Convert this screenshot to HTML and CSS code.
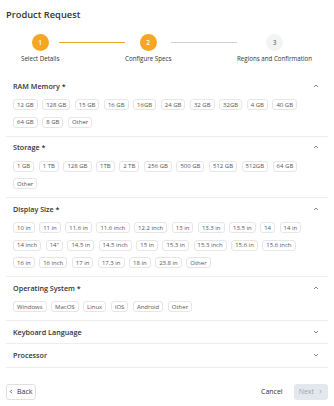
FILE: index.html
```html
<!DOCTYPE html>
<html>
<head>
<meta charset="utf-8">
<link rel="stylesheet" href="styles.css">
</head>
<body>
<div class="page">
  <h1 class="title">Product Request</h1>
  <div class="stepper">
    <div class="step"><div class="dot active">1</div><div class="step-label">Select Details</div></div>
    <div class="connector done"></div>
    <div class="step"><div class="dot active">2</div><div class="step-label">Configure Specs</div></div>
    <div class="connector"></div>
    <div class="step"><div class="dot">3</div><div class="step-label">Regions and Confirmation</div></div>
  </div>

  <section class="section first">
    <div class="section-head"><span class="section-title">RAM Memory *</span><svg class="chev" viewBox="0 0 6 6"><polyline points="1,4 3,2 5,4"/></svg></div>
    <div class="chips">
      <span class="chip">12 GB</span><span class="chip">128 GB</span><span class="chip">15 GB</span><span class="chip">16 GB</span><span class="chip">16GB</span><span class="chip">24 GB</span><span class="chip">32 GB</span><span class="chip">32GB</span><span class="chip">4 GB</span><span class="chip">40 GB</span><span class="chip">64 GB</span><span class="chip">8 GB</span><span class="chip">Other</span>
    </div>
  </section>

  <section class="section">
    <div class="section-head"><span class="section-title">Storage *</span><svg class="chev" viewBox="0 0 6 6"><polyline points="1,4 3,2 5,4"/></svg></div>
    <div class="chips">
      <span class="chip">1 GB</span><span class="chip">1 TB</span><span class="chip">128 GB</span><span class="chip">1TB</span><span class="chip">2 TB</span><span class="chip">256 GB</span><span class="chip">500 GB</span><span class="chip">512 GB</span><span class="chip">512GB</span><span class="chip">64 GB</span><span class="chip">Other</span>
    </div>
  </section>

  <section class="section">
    <div class="section-head"><span class="section-title">Display Size *</span><svg class="chev" viewBox="0 0 6 6"><polyline points="1,4 3,2 5,4"/></svg></div>
    <div class="chips">
      <span class="chip">10 in</span><span class="chip">11 in</span><span class="chip">11.6 in</span><span class="chip">11.6 inch</span><span class="chip">12.2 inch</span><span class="chip">13 in</span><span class="chip">13.3 in</span><span class="chip">13.5 in</span><span class="chip">14</span><span class="chip">14 in</span><span class="chip">14 inch</span><span class="chip">14"</span><span class="chip">14.5 in</span><span class="chip">14.5 inch</span><span class="chip">15 in</span><span class="chip">15.3 in</span><span class="chip">15.3 inch</span><span class="chip">15.6 in</span><span class="chip">15.6 inch</span><span class="chip">16 in</span><span class="chip">16 inch</span><span class="chip">17 in</span><span class="chip">17.3 in</span><span class="chip">18 in</span><span class="chip">23.8 in</span><span class="chip">Other</span>
    </div>
  </section>

  <section class="section">
    <div class="section-head"><span class="section-title">Operating System *</span><svg class="chev" viewBox="0 0 6 6"><polyline points="1,4 3,2 5,4"/></svg></div>
    <div class="chips">
      <span class="chip">Windows</span><span class="chip">MacOS</span><span class="chip">Linux</span><span class="chip">IOS</span><span class="chip">Android</span><span class="chip">Other</span>
    </div>
  </section>

  <section class="section collapsed">
    <div class="section-head"><span class="section-title">Keyboard Language</span><svg class="chev" viewBox="0 0 6 6"><polyline points="1,2 3,4 5,2"/></svg></div>
  </section>

  <section class="section collapsed">
    <div class="section-head"><span class="section-title">Processor</span><svg class="chev" viewBox="0 0 6 6"><polyline points="1,2 3,4 5,2"/></svg></div>
  </section>

  <div class="footer">
    <button class="btn back"><svg class="btn-chev" viewBox="0 0 6 6"><polyline points="3.5,1 1.5,3 3.5,5"/></svg>Back</button>
    <div class="footer-right">
      <button class="btn-text">Cancel</button>
      <button class="btn next">Next<svg class="btn-chev" viewBox="0 0 6 6"><polyline points="2,1 4,3 2,5"/></svg></button>
    </div>
  </div>
</div>
</body>
</html>
```

FILE: styles.css
```css
* { box-sizing: border-box; }
body {
  margin: 0;
  background: #fff;
  color: #333;
  font-family: "Open Sans", "Noto Sans", sans-serif;
}
.page {
  padding: 8px 6px 0;
}
.title {
  margin: 0;
  font-size: 9.3px;
  line-height: 14px;
  font-weight: 600;
  color: #333;
}
.stepper {
  display: flex;
  margin: 12px 16px 0 15px;
}
.step {
  display: flex;
  flex-direction: column;
  align-items: center;
}
.dot {
  width: 17px;
  height: 17px;
  border-radius: 50%;
  background: #f2f3f5;
  color: #555;
  font-size: 6.5px;
  display: flex;
  align-items: center;
  justify-content: center;
}
.dot.active {
  background: #f5a623;
  color: #fff;
  font-weight: 600;
}
.step-label {
  margin-top: 3px;
  font-size: 6.2px;
  line-height: 9px;
  white-space: nowrap;
  color: #333;
}
.connector {
  flex: 1;
  height: 1px;
  margin-top: 8px;
  background: #d0d0d0;
}
.connector.done {
  background: #f5a623;
}
.section {
  border-bottom: 1px solid #eeeeee;
  padding: 4.5px 7px 8px;
}
.section.first {
  margin-top: 12px;
}
.section.collapsed {
  padding-bottom: 5.8px;
}
.section-head {
  display: flex;
  justify-content: space-between;
  align-items: center;
  height: 12px;
}
.section-title {
  font-size: 7.2px;
  font-weight: 600;
  color: #333;
}
.chev {
  width: 6px;
  height: 6px;
  margin-right: 2px;
  fill: none;
  stroke: #666;
  stroke-width: 0.8;
}
.chips {
  display: flex;
  flex-wrap: wrap;
  gap: 6.5px 4.5px;
  margin-top: 7.5px;
}
.chip {
  height: 11px;
  padding: 0 3px;
  border: 1px solid #e6e6e6;
  border-radius: 3px;
  font-size: 6px;
  color: #555;
  display: flex;
  align-items: center;
}
.footer {
  display: flex;
  justify-content: space-between;
  align-items: center;
  margin-top: 16px;
}
.footer-right {
  display: flex;
  align-items: center;
  gap: 11px;
}
.btn {
  height: 16px;
  border-radius: 3px;
  font-family: inherit;
  font-size: 7px;
  display: flex;
  align-items: center;
  cursor: pointer;
}
.btn.back {
  background: #fff;
  border: 1px solid #e0e0e0;
  color: #333;
  padding: 0 2.5px 0 2px;
  gap: 3px;
}
.btn.next {
  background: #e3e8ee;
  border: none;
  color: #9aa3ad;
  padding: 0 5px;
  gap: 4px;
}
.btn-chev {
  width: 5px;
  height: 5px;
  fill: none;
  stroke: currentColor;
  stroke-width: 0.9;
}
.btn-text {
  background: none;
  border: none;
  padding: 0;
  font-family: inherit;
  font-size: 7px;
  color: #333;
}
```
